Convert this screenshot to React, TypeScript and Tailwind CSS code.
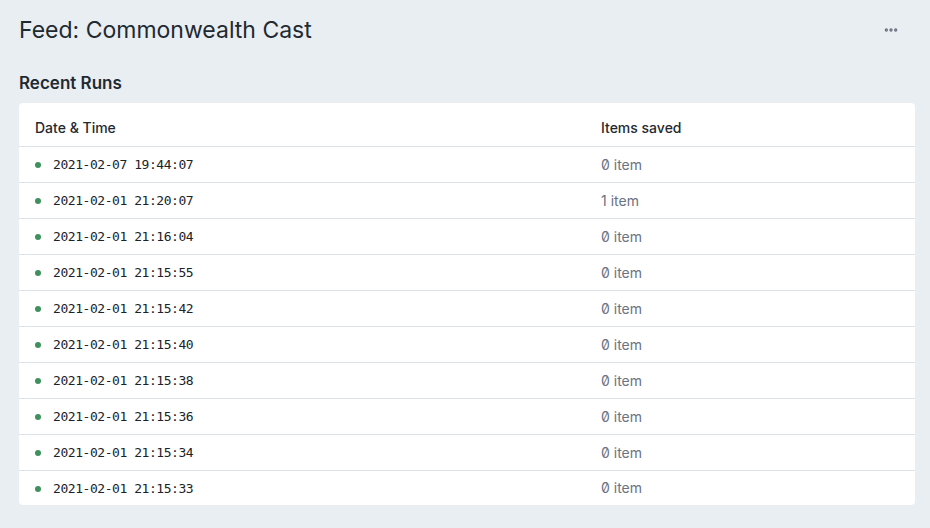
import { MoreHorizontal } from "lucide-react";

const runs = [
  { time: "2021-02-07 19:44:07", items: 0 },
  { time: "2021-02-01 21:20:07", items: 1 },
  { time: "2021-02-01 21:16:04", items: 0 },
  { time: "2021-02-01 21:15:55", items: 0 },
  { time: "2021-02-01 21:15:42", items: 0 },
  { time: "2021-02-01 21:15:40", items: 0 },
  { time: "2021-02-01 21:15:38", items: 0 },
  { time: "2021-02-01 21:15:36", items: 0 },
  { time: "2021-02-01 21:15:34", items: 0 },
  { time: "2021-02-01 21:15:33", items: 0 },
];

const App = () => {
  return (
    <div className="min-h-[528px] bg-[#e9eef3] pl-[19px] pr-[15px] pt-[14px] font-['Inter',sans-serif] text-[#1f2a30]">
      <div className="flex items-center justify-between">
        <h1 className="text-[23px] leading-8">Feed: Commonwealth Cast</h1>
        <button className="mr-[12px] flex h-6 w-6 items-center justify-center text-[#6b7280]">
          <MoreHorizontal size={16} strokeWidth={3} />
        </button>
      </div>

      <h2 className="mt-[25px] text-[17px] font-semibold leading-6">Recent Runs</h2>

      <div className="mt-2 overflow-hidden rounded bg-white text-sm">
        <div className="grid h-[43px] grid-cols-[566px_1fr] items-center px-4 pt-[6px] font-medium">
          <div>Date &amp; Time</div>
          <div>Items saved</div>
        </div>
        {runs.map((run, i) => (
          <div
            key={run.time}
            className={`grid grid-cols-[566px_1fr] items-center border-t border-[#dde3ea] px-4 ${
              i === runs.length - 1 ? "h-[35px]" : "h-9"
            }`}
          >
            <div className="flex items-center">
              <span className="mt-[1px] h-[6px] w-[6px] rounded-full bg-[#3f8f5f]" />
              <span className="ml-3 pt-[2px] font-['DejaVu_Sans_Mono',monospace] text-[13px] tracking-[-0.45px] text-[#1a2328]">
                {run.time}
              </span>
            </div>
            <div className="slashed-zero text-[#6b7280]">{run.items} item</div>
          </div>
        ))}
      </div>
    </div>
  );
};

export default App;
